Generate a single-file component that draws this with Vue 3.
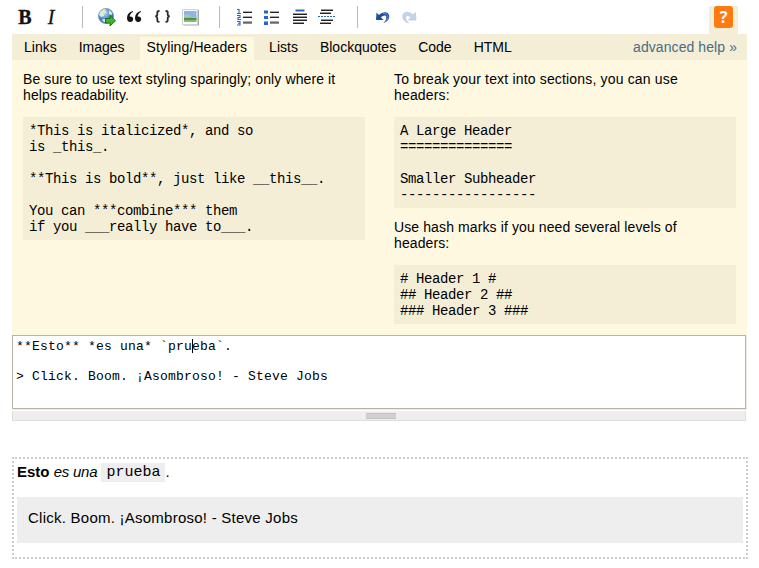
<script setup>
const tabs = [
  { label: 'Links' },
  { label: 'Images' },
  { label: 'Styling/Headers', active: true },
  { label: 'Lists' },
  { label: 'Blockquotes' },
  { label: 'Code' },
  { label: 'HTML' },
]
const stylingSample = `*This is italicized*, and so
is _this_.

**This is bold**, just like __this__.

You can ***combine*** them
if you ___really have to___.`
const headerSample = `A Large Header
==============

Smaller Subheader
-----------------`
const hashSample = `# Header 1 #
## Header 2 ##
### Header 3 ###`
</script>

<template>
  <div class="editor">
    <div class="toolbar">
      <div class="group first">
        <span class="letter bold">B</span>
        <span class="letter italic">I</span>
      </div>
      <i class="sep"></i>
      <div class="group">
        <svg class="icon" viewBox="0 0 20 20">
          <defs>
            <radialGradient id="globe" cx=".4" cy=".3" r=".75">
              <stop offset="0" stop-color="#b9d8f4" />
              <stop offset=".55" stop-color="#4f8aca" />
              <stop offset="1" stop-color="#1f5597" />
            </radialGradient>
          </defs>
          <circle cx="9" cy="9" r="7.600" fill="url(#globe)" stroke="#6790b8" stroke-width=".7" />
          <path d="M3 5 6 2.500 9 2 8 4 10 5 7 7 7 9 4 10 2 8ZM12 3.500 14 4.500 15.500 7 14 8 12 7ZM5 12.500 8 12 9 13 8 15.500 6 14.500Z" fill="#dcebd2" />
          <path d="M8.500 11.500h4.500V8.500l5.500 5.300-5.500 5.200v-3h-4.500z" fill="#43b32b" stroke="#197016" />
        </svg>
        <svg class="icon" viewBox="0 0 20 20">
          <path transform="translate(0 .6)" d="M9 3.500C5 4.500 3 7 3 10.500 3 13 4.300 14.500 6.300 14.500c1.700 0 2.900-1.200 2.900-2.800S8 9 6.400 9H5.600C5.800 7 7 5.300 9 4.300zM17 3.500c-4 1-6 3.500-6 7 0 2.500 1.300 4 3.300 4 1.700 0 2.900-1.200 2.900-2.800S16 9 14.400 9h-.8c.2-2 1.400-3.700 3.400-4.700z" fill="#151515" />
        </svg>
        <svg class="icon" viewBox="0 0 20 20">
          <path d="M8.500 4H8Q6.300 4 6.300 5.500v1.800Q6.300 9.200 4.300 9.400 6.300 9.600 6.300 11.500v1.700q0 1.600 1.700 1.600h.5M14.500 4h.5q1.700 0 1.700 1.500v1.800q0 1.900 2 2.100-2 .2-2 2.100v1.700q0 1.600-1.700 1.600H14.500" fill="none" stroke="#2c2c2c" stroke-width="1.800" />
        </svg>
        <svg class="icon" viewBox="0 0 20 20">
          <path d="M5.500 3h15.500v15.500H5.500z" fill="#a7a7a7" />
          <path d="M4.500 2.500h15v15h-15z" fill="#fcfcfc" stroke="#d0d0d0" />
          <path d="M6 4h12.500v6H6z" fill="#8eb5e5" />
          <path d="M6 8.500Q9 6.500 12 9t6.500 0v2H6z" fill="#a8cbb8" />
          <path d="M6 10.500h12.500V15H6z" fill="#8cb774" />
          <path d="M6 11h12.500v2H6z" fill="#4f9248" />
        </svg>
      </div>
      <i class="sep"></i>
      <div class="group">
        <svg class="icon" viewBox="0 0 20 20">
          <path d="M3 2.500h2v4M3 6.500h4M3 8.500h3v2H4v2h3M3 14.500h3v3.500H3M4 16.300h2" fill="none" stroke="#2864c8" stroke-width="1.100" />
          <path d="M9 5h9M9 10h9M9 15h9" stroke="#aaa" stroke-width="2" />
          <path d="M9 5.500h9M9 10.500h9M9 16h9" stroke="#252525" stroke-width="1.200" />
        </svg>
        <svg class="icon" viewBox="0 0 20 20">
          <path d="M3 3.500h4v3H3zM3 9h4v3H3zM3 14.500h4V18H3z" fill="#2864c8" />
          <path d="M9 5h9M9 10h9M9 15h9" stroke="#aaa" stroke-width="2" />
          <path d="M9 5.500h9M9 10.500h9M9 16h9" stroke="#252525" stroke-width="1.200" />
        </svg>
        <svg class="icon" viewBox="0 0 20 20">
          <path d="M7.500 3.500h9" stroke="#2864c8" stroke-width="2" />
          <path d="M5 7h14M5 10h14M5 13h14M5 16h11" stroke="#999" stroke-width="1.800" />
          <path d="M5 7.500h14M5 10.500h14M5 13.500h14M5 16.500h11" stroke="#222" stroke-width="1.200" />
        </svg>
        <svg class="icon" viewBox="0 0 20 20">
          <path d="M6 3h12M5 6h11M6 13h12M5 16h11" stroke="#999" stroke-width="1.800" />
          <path d="M6 3.500h12M5 6.500h11M6 13.500h12M5 16.500h11" stroke="#222" stroke-width="1.200" />
          <path d="M3 9.500h17" stroke="#2864c8" stroke-dasharray="2 1" />
        </svg>
      </div>
      <i class="sep last"></i>
      <div class="group">
        <svg class="icon" viewBox="0 0 20 20">
          <path d="M4.500 5.500 4 13h7.500L9 10.500C11.500 8 14.300 7.800 14.300 10.500c0 2-.8 3.500-2.800 5.500 4-1.300 6.200-4 5.700-7.500C16.400 4.500 11 3.800 7 8z" fill="#204f99" />
          <path d="M11 6.500q5-.5 5 4 -.5 2.500-2.500 4" fill="none" stroke="#6f9fd0" stroke-width=".8" />
        </svg>
        <svg class="icon" viewBox="0 0 20 20">
          <path d="M16.500 5.500 17 13h-7.500l2.500-2.500c-2.500-2.500-5.300-2.700-5.300 0 0 2 .8 3.500 2.800 5.500-4-1.300-6.200-4-5.700-7.500C4.600 4.500 10 3.800 14 8z" fill="#c2d4e8" stroke="#a4bedb" stroke-width=".5" />
        </svg>
      </div>
      <div class="help-tab"><span class="help-icon">?</span></div>
    </div>

    <div class="tabs">
      <span v-for="t in tabs" :key="t.label" class="tab" :class="{ active: t.active }">{{ t.label }}</span>
      <a class="advanced">advanced help »</a>
    </div>

    <div class="help">
      <div class="col">
        <p>Be sure to use text styling sparingly; only where it<br />helps readability.</p>
        <pre>{{ stylingSample }}</pre>
      </div>
      <div class="col">
        <p class="loose">To break your text into sections, you can use<br />headers:</p>
        <pre>{{ headerSample }}</pre>
        <p>Use hash marks if you need several levels of<br />headers:</p>
        <pre>{{ hashSample }}</pre>
      </div>
    </div>

    <div class="input"><div>**Esto** *es una* `pru<i class="caret"></i>eba`.</div><div>&nbsp;</div><div>&gt; Click. Boom. ¡Asombroso! - Steve Jobs</div></div>
    <div class="grippie"><i></i></div>

    <div class="preview">
      <p><b>Esto</b> <em>es una</em> <code>prueba</code>.</p>
      <blockquote>Click. Boom. ¡Asombroso! - Steve Jobs</blockquote>
    </div>
  </div>
</template>

<style>
body {
  background: #fff;
}
</style>

<style scoped>
.editor {
  box-sizing: border-box;
  height: 568px;
  padding-left: 12px;
  width: 759px;
  overflow: hidden;
  font-family: 'Liberation Sans', Arial, sans-serif;
  font-size: 14px;
  line-height: 16px;
  color: #000;
}
.toolbar {
  display: flex;
  align-items: flex-start;
  height: 34px;
  width: 735px;
}
.group {
  display: flex;
  gap: 7px;
  padding-top: 7px;
}
.group.first {
  padding-left: 3px;
  padding-right: 5px;
  gap: 6px;
}
.letter {
  width: 20px;
  text-align: center;
  font: 20px/20px 'Liberation Serif', serif;
  color: #111;
  -webkit-text-stroke: 0.3px #111;
}
.bold {
  font-weight: bold;
}
.italic {
  font-style: italic;
}
.icon {
  width: 20px;
  height: 20px;
  overflow: visible;
}
.sep {
  width: 1px;
  height: 22px;
  margin: 6px 14px 0 16px;
  background: #bbb;
}
.group + .sep ~ .sep {
  margin-left: 21px;
}
.group + .sep.last.last ~ .group {
  margin-left: 0;
}
.toolbar .group + .sep.last {
  margin-left: 22px;
}
.help-tab {
  margin: 6px 9px 0 auto;
  width: 29px;
  height: 28px;
  background: #f4eed7;
  display: flex;
  justify-content: center;
}
.help-icon {
  width: 19px;
  height: 22px;
  border-radius: 3px;
  background: #ff7a12;
  color: #fff;
  text-align: center;
  font: bold 16px/23px 'Noto Sans', sans-serif;
}
.tabs {
  display: flex;
  align-items: flex-end;
  gap: 8px;
  box-sizing: border-box;
  width: 735px;
  height: 26px;
  padding: 0 10px 0 5px;
  background: #f4eed7;
}
.tab {
  height: 23px;
  line-height: 21px;
  padding: 0 7px;
}
.tab.active {
  background: #fff8e0;
  letter-spacing: 0.11px;
}
.advanced {
  margin-left: auto;
  line-height: 21px;
  height: 23px;
  color: #4a6b82;
  letter-spacing: 0.08px;
}
.help {
  box-sizing: border-box;
  display: flex;
  gap: 29px;
  width: 735px;
  height: 275px;
  padding: 11px;
  background: #fff8e0;
}
.col {
  width: 342px;
}
p,
pre,
blockquote {
  margin: 0;
}
.col p {
  letter-spacing: 0.11px;
}
.col p.loose {
  letter-spacing: 0.17px;
}
pre {
  margin: 14px 0 11px;
  padding: 6px 6px 5px;
  background: #f4eed7;
  font: 14px/16px 'Liberation Mono', monospace;
  letter-spacing: -0.4px;
}
.input {
  box-sizing: border-box;
  width: 734px;
  height: 74px;
  padding: 3px;
  border: 1px solid #b8b2aa;
  box-shadow: 1px 1px 0 #eee8e3;
  font: 13px/15px 'Liberation Mono', monospace;
  letter-spacing: 0.2px;
}
.caret {
  display: inline-block;
  width: 1px;
  height: 14px;
  margin-right: -1px;
  vertical-align: -3px;
  background: #000;
}
.grippie {
  box-sizing: border-box;
  display: flex;
  justify-content: center;
  width: 734px;
  height: 10px;
  margin-top: 2px;
  padding-top: 2px;
  background: #eee;
  border: 1px solid #ddd;
  border-top: 0;
}
.grippie i {
  width: 30px;
  height: 6px;
  box-sizing: border-box;
  margin-left: 4px;
  background: #d0d0d0;
  border: solid #c1c1c1;
  border-width: 1px 0;
}
.preview {
  box-sizing: border-box;
  width: 736px;
  height: 102px;
  margin-top: 36px;
  padding: 3px;
  border: 2px dotted #ccc;
  font-size: 15px;
  line-height: 20px;
}
.preview p {
  height: 20px;
}
em {
  letter-spacing: -0.25px;
}
code {
  padding: 1px 5px;
  background: #eee;
  font: 15px/17px 'Liberation Mono', monospace;
  vertical-align: 1px;
}
blockquote {
  margin-top: 15px;
  height: 46px;
  padding: 11px 11px;
  box-sizing: border-box;
  background: #eee;
  letter-spacing: 0.245px;
}
</style>
